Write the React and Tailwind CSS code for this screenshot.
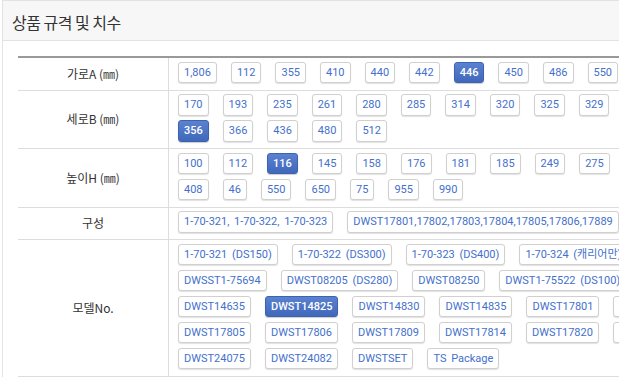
import React from 'react';

const rows = [
  {
    label: '가로A (㎜)',
    lines: [['1,806', '112', '355', '410', '440', '442', '446', '450', '486', '550', '650', '75']],
    active: '446',
  },
  {
    label: '세로B (㎜)',
    lines: [
      ['170', '193', '235', '261', '280', '285', '314', '320', '325', '329', '340'],
      ['356', '366', '436', '480', '512'],
    ],
    active: '356',
  },
  {
    label: '높이H (㎜)',
    lines: [
      ['100', '112', '116', '145', '158', '176', '181', '185', '249', '275', '290'],
      ['408', '46', '550', '650', '75', '955', '990'],
    ],
    active: '116',
  },
  {
    label: '구성',
    lines: [['1-70-321, 1-70-322, 1-70-323', 'DWST17801,17802,17803,17804,17805,17806,17889']],
  },
  {
    label: '모델No.',
    lines: [
      ['1-70-321 (DS150)', '1-70-322 (DS300)', '1-70-323 (DS400)', '1-70-324 (캐리어만)'],
      ['DWSST1-75694', 'DWST08205 (DS280)', 'DWST08250', 'DWST1-75522 (DS100)'],
      ['DWST14635', 'DWST14825', 'DWST14830', 'DWST14835', 'DWST17801', 'DWST17802'],
      ['DWST17805', 'DWST17806', 'DWST17809', 'DWST17814', 'DWST17820', 'DWST17823'],
      ['DWST24075', 'DWST24082', 'DWSTSET', 'TS Package'],
    ],
    active: 'DWST14825',
  },
];

const Chip = ({ text, active }) => (
  <span
    className={`shrink-0 h-[21.5px] px-[5px] flex items-center rounded-[3px] border whitespace-nowrap text-[11px] leading-none [word-spacing:2px] ${
      active
        ? 'bg-gradient-to-b from-[#5b82d0] to-[#4068bb] border-[#3d62b2] text-white font-medium shadow-[0_1px_1px_rgba(0,0,0,0.2)]'
        : 'bg-white border-[#d0d0d0] text-[#4470cc] shadow-[0_1px_1px_rgba(0,0,0,0.12)]'
    }`}
    style={{ fontFamily: 'Roboto, "Noto Sans CJK KR", sans-serif' }}
  >
    {text}
  </span>
);

export default function App() {
  return (
    <div
      className="h-screen w-full overflow-hidden bg-white"
      style={{ fontFamily: '"Noto Sans CJK KR", "Noto Sans", sans-serif' }}
    >
      <div className="ml-[2px] w-[1000px] border border-[#e3e3e3]">
        <div className="h-[40px] bg-[#f7f7f7] border-b border-[#e3e3e3] flex items-center pl-[9px] pt-[2px]">
          <h3 className="text-[16px] text-[#333] tracking-[-0.5px] font-normal">상품 규격 및 치수</h3>
        </div>

        <div className="pt-[15px] pl-[15px]">
          <div className="border-t-2 border-[#999]">
            {rows.map((row) => (
              <div key={row.label} className="flex border-b border-[#ddd]">
                <div className="w-[151px] shrink-0 border-r border-[#ddd] flex items-center justify-center text-[12px] text-[#333]">
                  {row.label}
                </div>
                <div className="flex-1 pl-[9px] pt-[3.5px] pb-[6.5px] flex flex-col gap-y-[4.5px]">
                  {row.lines.map((line, i) => (
                    <div key={i} className="flex gap-x-[14px]">
                      {line.map((v) => (
                        <Chip key={v} text={v} active={v === row.active} />
                      ))}
                    </div>
                  ))}
                </div>
              </div>
            ))}
          </div>
        </div>
      </div>
    </div>
  );
}
